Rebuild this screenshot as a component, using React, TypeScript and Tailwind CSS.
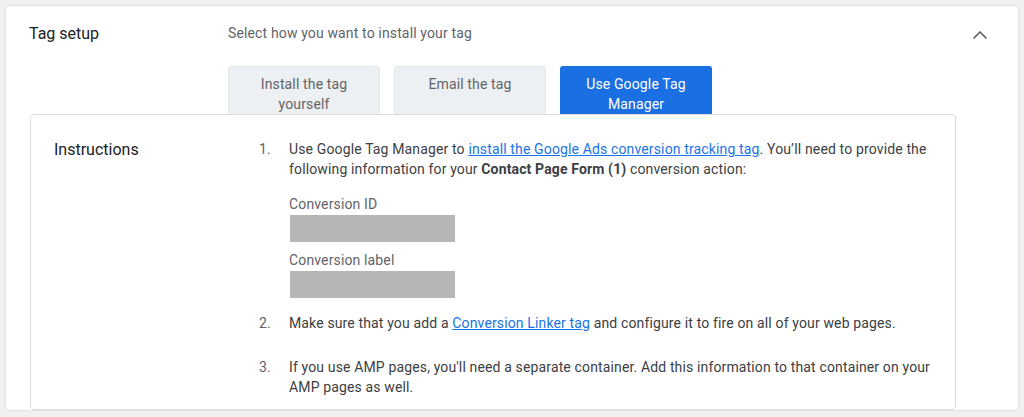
import { ChevronUp } from 'lucide-react';

const options = [
  { id: 'self', label: 'Install the tag yourself' },
  { id: 'email', label: 'Email the tag' },
  { id: 'gtm', label: 'Use Google Tag Manager' },
];

const selected = 'gtm';

const RedactedField = ({ label }: { label: string }) => (
  <div>
    <div className="leading-5 text-[#5f6368]">{label}</div>
    <div className="ml-[1px] mt-[1px] h-[27px] w-[165px] bg-[#b6b6b6]" />
  </div>
);

const App = () => {
  return (
    <div
      className="h-[417px] overflow-hidden bg-[#eef0f1] p-[5px] text-[14px] tracking-[0.14px] text-[#3c4043]"
      style={{ fontFamily: 'Roboto, "Liberation Sans", sans-serif' }}
    >
      <div className="h-[406px] overflow-hidden rounded-[4px] border border-[#dfe1e3] bg-white">
        {/* header */}
        <div className="flex items-start pt-[16px] pl-[23px] pr-[26px]">
          <h2 className="w-[199px] text-[16px] leading-6 tracking-normal text-[#202124]">Tag setup</h2>
          <div className="flex-1">
            <p className="leading-5 text-[#5f6368] pt-[1px]">Select how you want to install your tag</p>
          </div>
          <ChevronUp className="mt-[1px] h-6 w-6 text-[#5f6368]" strokeWidth={1.75} />
        </div>

        {/* option buttons */}
        <div className="flex gap-[14px] pl-[222px] pt-[19px]">
          {options.map((o) => (
            <button
              key={o.id}
              className={
                o.id === selected
                  ? 'flex h-[56px] w-[152px] items-start justify-center rounded-[3px] bg-[#1a6fe2] px-5 pt-[8px] text-center leading-5 text-white'
                  : 'flex h-[56px] w-[152px] items-start justify-center rounded-[3px] border border-[#e3e6e8] bg-[#edf0f2] px-5 pt-[7px] text-center leading-5 text-[#5f6368]'
              }
            >
              <span>{o.label}</span>
            </button>
          ))}
        </div>

        {/* instructions card */}
        <div className="relative z-10 mx-[24px] -mt-[8px] w-[926px] rounded-[4px] border border-[#dadce0] bg-white pb-[12px]">
          <div className="flex pt-[23px] pl-[23px]">
            <h3 className="w-[205px] text-[16px] leading-6 tracking-normal text-[#202124]">Instructions</h3>
            <ol className="w-[672px] pt-[1px]">
              <li className="flex">
                <span className="w-[30px] leading-5 text-[#5f6368]">1.</span>
                <div className="flex-1">
                  <p className="leading-5">
                    Use Google Tag Manager to{' '}
                    <a href="#" className="text-[#1a73e8] underline">
                      install the Google Ads conversion tracking tag
                    </a>
                    . You’ll need to provide the following information for your{' '}
                    <span className="font-bold">Contact Page Form (1)</span> conversion action:
                  </p>
                  <div className="mt-[15px] flex flex-col gap-[8px]">
                    <RedactedField label="Conversion ID" />
                    <RedactedField label="Conversion label" />
                  </div>
                </div>
              </li>
              <li className="mt-[15px] flex">
                <span className="w-[30px] leading-5 text-[#5f6368]">2.</span>
                <p className="flex-1 leading-5">
                  Make sure that you add a{' '}
                  <a href="#" className="text-[#1a73e8] underline">
                    Conversion Linker tag
                  </a>{' '}
                  and configure it to fire on all of your web pages.
                </p>
              </li>
              <li className="mt-[24px] flex">
                <span className="w-[30px] leading-5 text-[#5f6368]">3.</span>
                <p className="flex-1 leading-5">
                  If you use AMP pages, you'll need a separate container. Add this information to that
                  container on your AMP pages as well.
                </p>
              </li>
            </ol>
          </div>
        </div>
      </div>
    </div>
  );
};

export default App;
